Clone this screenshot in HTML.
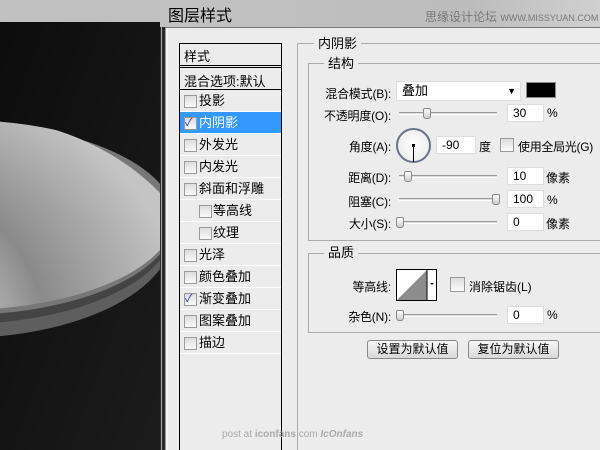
<!DOCTYPE html>
<html><head><meta charset="utf-8"><style>
*{margin:0;padding:0;box-sizing:border-box}
html,body{width:600px;height:450px;overflow:hidden}
body{position:relative;background:#ececec;font-family:"Liberation Sans","Noto Sans CJK SC",sans-serif;font-size:13px;color:#000}
.a{position:absolute;white-space:nowrap}
.lb{position:absolute;white-space:nowrap;right:209px;font-size:12px;letter-spacing:-0.2px}
.cb{position:absolute;width:13px;height:13px;border:1px solid #9a9a9a;background:linear-gradient(#ddd,#fafafa)}
.row{position:absolute;left:180px;width:101px;height:22px;border-bottom:1px solid #fff;line-height:22px}
.row .cb{top:5px}
.in{position:absolute;height:18px;background:#fff;border:1px solid #ddd;line-height:16px;padding-left:5px;font-size:12px}
.sl{position:absolute;height:3px;border-top:1px solid #999;border-bottom:1px solid #fff;background:#ddd}
.th{position:absolute;width:8px;height:11px;background:linear-gradient(#fff,#ccc);border:1px solid #888;border-radius:2px 2px 3px 3px}
.gb{position:absolute;border:1px solid #aaa}
.gl{position:absolute;background:#ececec;padding:0 4px;line-height:14px}
.btn{position:absolute;height:19px;border:1px solid #888;border-radius:3px;background:linear-gradient(#f6f6f6,#d8d8d8);text-align:center;line-height:17px;font-size:12px}
.u{font-size:12px}
</style></head><body>
<svg class="a" style="left:0;top:0" width="165" height="450">
<defs>
<linearGradient id="bg" x1="0" y1="0" x2="1" y2="1"><stop offset="0" stop-color="#0c0c0c"/><stop offset="1" stop-color="#1c1c1c"/></linearGradient>
<radialGradient id="dm" cx="0.25" cy="0.55" r="0.7"><stop offset="0" stop-color="#9a9a9a"/><stop offset="0.35" stop-color="#c8c8c8"/><stop offset="0.6" stop-color="#8a8a8a"/><stop offset="1" stop-color="#c4c4c4"/></radialGradient>
<clipPath id="c1"><ellipse cx="-40" cy="215" rx="215" ry="95"/></clipPath>
</defs>
<rect width="165" height="450" fill="url(#bg)"/>
<rect width="165" height="22" fill="#c0c0c0"/>
<ellipse cx="-40" cy="233" rx="213" ry="105" fill="#5e5e5e"/>
<ellipse cx="-40" cy="225" rx="214" ry="99" fill="#444"/>
<ellipse cx="-40" cy="219" rx="215" ry="96" fill="#777"/>
<g clip-path="url(#c1)"><ellipse cx="-40" cy="310" rx="250" ry="195" fill="url(#dm)"/></g>
<rect x="160" y="0" width="5" height="450" fill="#2a2a2a"/>
<rect x="161" y="22" width="1" height="428" fill="#aaa"/>
</svg>
<div class="a" style="left:160px;top:0;width:440px;height:27px;background:linear-gradient(90deg,#c2c2c2,#bcbcbc 70%,#d0d0d0)"></div>
<div class="a" style="left:168px;top:2px;font-size:16px">图层样式</div>
<div class="a" style="left:425px;top:8px;font-size:12px;color:#777">思缘设计论坛 <span style="font-size:9px">WWW.MISSYUAN.COM</span></div>
<div class="a" style="left:165px;top:27px;width:435px;height:1px;background:#777"></div>
<div class="a" style="left:165px;top:28px;width:3px;height:422px;background:#f4f4f4;border-left:1px solid #999"></div>
<div class="a" style="left:179px;top:43px;width:103px;height:407px;border:1px solid #000;border-bottom:none;background:#ececec"></div>
<div class="a" style="left:184px;top:46px">样式</div>
<div class="a" style="left:180px;top:65px;width:101px;height:3px;border-top:1px solid #000;border-bottom:1px solid #000"></div>
<div class="a" style="left:184px;top:71px">混合选项:默认</div>
<div class="a" style="left:180px;top:89px;width:101px;height:1px;background:#000"></div>
<div class="row" style="top:90px"><div class="cb" style="left:4px"></div><span class="a" style="left:19px">投影</span></div>
<div class="row" style="top:112px;background:#3399ff;color:#fff"><div class="cb" style="left:4px;color:#33a;font-size:11px;line-height:11px">✓</div><span class="a" style="left:19px">内阴影</span></div>
<div class="row" style="top:134px"><div class="cb" style="left:4px"></div><span class="a" style="left:19px">外发光</span></div>
<div class="row" style="top:156px"><div class="cb" style="left:4px"></div><span class="a" style="left:19px">内发光</span></div>
<div class="row" style="top:178px"><div class="cb" style="left:4px"></div><span class="a" style="left:19px">斜面和浮雕</span></div>
<div class="row" style="top:200px"><div class="cb" style="left:19px"></div><span class="a" style="left:33px">等高线</span></div>
<div class="row" style="top:222px"><div class="cb" style="left:19px"></div><span class="a" style="left:33px">纹理</span></div>
<div class="row" style="top:244px"><div class="cb" style="left:4px"></div><span class="a" style="left:19px">光泽</span></div>
<div class="row" style="top:266px"><div class="cb" style="left:4px"></div><span class="a" style="left:19px">颜色叠加</span></div>
<div class="row" style="top:288px"><div class="cb" style="left:4px;color:#33a;font-size:11px;line-height:11px">✓</div><span class="a" style="left:19px">渐变叠加</span></div>
<div class="row" style="top:310px"><div class="cb" style="left:4px"></div><span class="a" style="left:19px">图案叠加</span></div>
<div class="row" style="top:332px"><div class="cb" style="left:4px"></div><span class="a" style="left:19px">描边</span></div>
<div class="a" style="left:297px;top:43px;width:1px;height:407px;background:#aaa"></div>
<div class="a" style="left:298px;top:43px;width:302px;height:1px;background:#aaa"></div>
<div class="gl" style="left:314px;top:37px">内阴影</div>
<div class="gb" style="left:308px;top:63px;width:300px;height:178px"></div>
<div class="gl" style="left:324px;top:57px">结构</div>
<div class="lb" style="top:85px">混合模式(B):</div>
<div class="a" style="left:396px;top:81px;width:125px;height:20px;background:#fff;border:1px solid #ddd;padding-left:5px;line-height:18px">叠加<span class="a" style="right:4px;top:0;font-size:9px">▼</span></div>
<div class="a" style="left:526px;top:82px;width:30px;height:16px;background:#000;border:1px solid #888"></div>
<div class="lb" style="top:107px">不透明度(O):</div>
<div class="sl" style="left:399px;top:112px;width:98px"></div><div class="th" style="left:423px;top:108px"></div>
<div class="in" style="left:507px;top:104px;width:37px">30</div><div class="a u" style="left:547px;top:106px">%</div>
<div class="lb" style="top:138px">角度(A):</div>
<div class="a" style="left:396px;top:128px;width:35px;height:35px;border-radius:50%;border:2px solid #6a7288;background:radial-gradient(#fff,#e8e8e8)"></div>
<div class="a" style="left:413px;top:145px;width:1px;height:17px;background:#000"></div>
<div class="a" style="left:412px;top:144px;width:3px;height:3px;background:#000"></div>
<div class="in" style="left:436px;top:136px;width:40px">-90</div><div class="a u" style="left:479px;top:138px">度</div>
<div class="cb" style="left:500px;top:138px;width:14px;height:14px"></div><div class="a u" style="left:518px;top:138px;letter-spacing:-0.3px">使用全局光(G)</div>
<div class="lb" style="top:169px">距离(D):</div>
<div class="sl" style="left:399px;top:175px;width:98px"></div><div class="th" style="left:404px;top:171px"></div>
<div class="in" style="left:507px;top:167px;width:37px">10</div><div class="a u" style="left:546px;top:169px">像素</div>
<div class="lb" style="top:193px">阻塞(C):</div>
<div class="sl" style="left:399px;top:198px;width:98px"></div><div class="th" style="left:492px;top:194px"></div>
<div class="in" style="left:507px;top:190px;width:37px">100</div><div class="a u" style="left:547px;top:193px">%</div>
<div class="lb" style="top:215px">大小(S):</div>
<div class="sl" style="left:399px;top:221px;width:98px"></div><div class="th" style="left:396px;top:217px"></div>
<div class="in" style="left:507px;top:213px;width:37px">0</div><div class="a u" style="left:546px;top:215px">像素</div>
<div class="gb" style="left:308px;top:253px;width:300px;height:80px"></div>
<div class="gl" style="left:324px;top:246px">品质</div>
<div class="lb" style="top:278px">等高线:</div>
<div class="a" style="left:396px;top:269px;width:41px;height:32px;border:1px solid #000;background:#fff"><svg width="39" height="30" style="position:absolute;left:0;top:0"><polygon points="0,30 30,0 30,30" fill="#8c8c8c"/><line x1="30" y1="0" x2="30" y2="30" stroke="#000"/><polygon points="33,13 37,13 35,15" fill="#000"/></svg></div>
<div class="cb" style="left:450px;top:277px;width:15px;height:15px"></div><div class="a u" style="left:469px;top:278px">消除锯齿(L)</div>
<div class="lb" style="top:308px">杂色(N):</div>
<div class="sl" style="left:397px;top:314px;width:100px"></div><div class="th" style="left:396px;top:310px"></div>
<div class="in" style="left:507px;top:306px;width:37px">0</div><div class="a u" style="left:547px;top:308px">%</div>
<div class="btn" style="left:367px;top:340px;width:91px">设置为默认值</div>
<div class="btn" style="left:468px;top:340px;width:91px">复位为默认值</div>
<div class="a" style="left:222px;top:429px;font-size:10px;color:#aaa">post at <b>iconfans</b>.com <i><b>IcOnfans</b></i></div>
</body></html>
